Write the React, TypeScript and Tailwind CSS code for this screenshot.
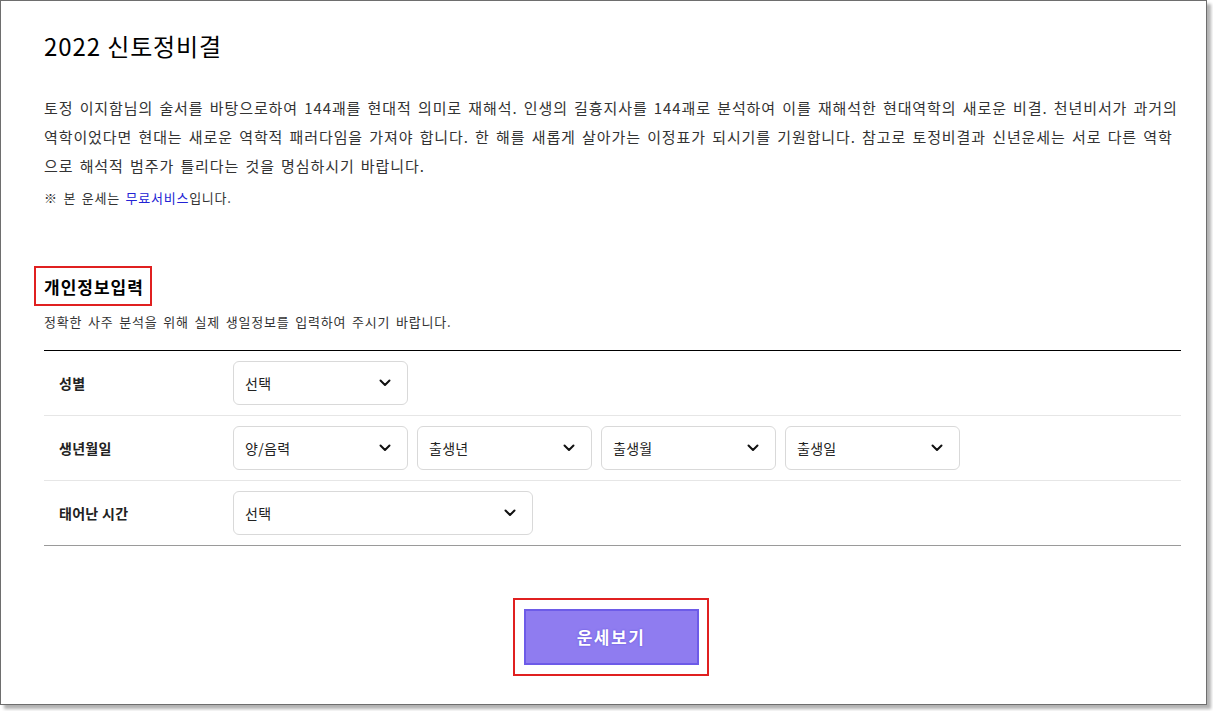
import React from "react";

const font = { fontFamily: '"Noto Sans CJK KR", "Noto Sans", sans-serif' };

function Chevron() {
  return (
    <svg width="12" height="8" viewBox="0 0 12 8" className="shrink-0">
      <path d="M1.5 1.5 L6 6 L10.5 1.5" fill="none" stroke="#111" strokeWidth="2" strokeLinecap="round" strokeLinejoin="round" />
    </svg>
  );
}

function Select({ label, w }: { label: string; w: string }) {
  return (
    <div className={`${w} h-[44px] border border-[#d9d9d9] rounded-[6px] bg-white flex items-center justify-between pl-[11px] pr-[16px] text-[14px] text-[#222] tracking-[0.3px]`}>
      <span>{label}</span>
      <Chevron />
    </div>
  );
}

function Row({ label, children, last }: { label: string; children: React.ReactNode; last?: boolean }) {
  return (
    <div className={`flex items-center h-[65px] border-b ${last ? "border-[#9a9a9a]" : "border-[#e6e6e6]"}`}>
      <div className="w-[189px] pl-[15px] text-[14px] font-semibold text-[#222] tracking-[0.3px]">{label}</div>
      <div className="flex gap-[9px]">{children}</div>
    </div>
  );
}

export default function App() {
  return (
    <div className="w-[1213px] h-[711px] bg-white" style={font}>
      <div className="w-[1207px] h-[705px] border border-[#6e6e6e] bg-white shadow-[4px_4px_3px_rgba(0,0,0,0.3)] pl-[43px] pr-[25px] pt-[29px]">
        <h1 className="text-[24px] leading-[32px] text-black font-normal tracking-[0.9px]">2022 신토정비결</h1>
        <div className="mt-[31px] text-[15px] leading-[29px] text-[#333] [word-spacing:2px] tracking-[0.9px] whitespace-nowrap">
          <div>토정 이지함님의 술서를 바탕으로하여 144괘를 현대적 의미로 재해석. 인생의 길흉지사를 144괘로 분석하여 이를 재해석한 현대역학의 새로운 비결. 천년비서가 과거의</div>
          <div>역학이었다면 현대는 새로운 역학적 패러다임을 가져야 합니다. 한 해를 새롭게 살아가는 이정표가 되시기를 기원합니다. 참고로 토정비결과 신년운세는 서로 다른 역학</div>
          <div>으로 해석적 범주가 틀리다는 것을 명심하시기 바랍니다.</div>
        </div>
        <p className="mt-[8px] text-[13px] leading-[20px] text-[#333] [word-spacing:2px] tracking-[0.75px]">
          ※ 본 운세는 <span className="text-[#2323d4]">무료서비스</span>입니다.
        </p>
        <div className="mt-[58px] ml-[-10px] w-[118px] h-[40px] border-2 border-[#e02020] flex items-center pl-[8px]">
          <span className="text-[17px] font-bold text-black leading-none tracking-[1px]">개인정보입력</span>
        </div>
        <p className="mt-[6px] text-[13px] leading-[20px] text-[#333] [word-spacing:2px] tracking-[0.8px]">
          정확한 사주 분석을 위해 실제 생일정보를 입력하여 주시기 바랍니다.
        </p>
        <div className="mt-[18px] border-t border-black">
          <Row label="성별">
            <Select label="선택" w="w-[175px]" />
          </Row>
          <Row label="생년월일">
            <Select label="양/음력" w="w-[175px]" />
            <Select label="출생년" w="w-[175px]" />
            <Select label="출생월" w="w-[175px]" />
            <Select label="출생일" w="w-[175px]" />
          </Row>
          <Row label="태어난 시간" last>
            <Select label="선택" w="w-[300px]" />
          </Row>
        </div>
        <div className="flex justify-center mt-[52px] pr-[3px]">
          <div className="w-[196px] h-[78px] border-2 border-[#e02020] flex items-center justify-center">
            <button className="w-[175px] h-[56px] bg-[#8f7cf0] border-2 border-[#6d5be8] text-white text-[17px] font-bold tracking-[1.5px] [text-shadow:0_0_2px_rgba(60,40,200,0.6)]">
              운세보기
            </button>
          </div>
        </div>
      </div>
    </div>
  );
}
